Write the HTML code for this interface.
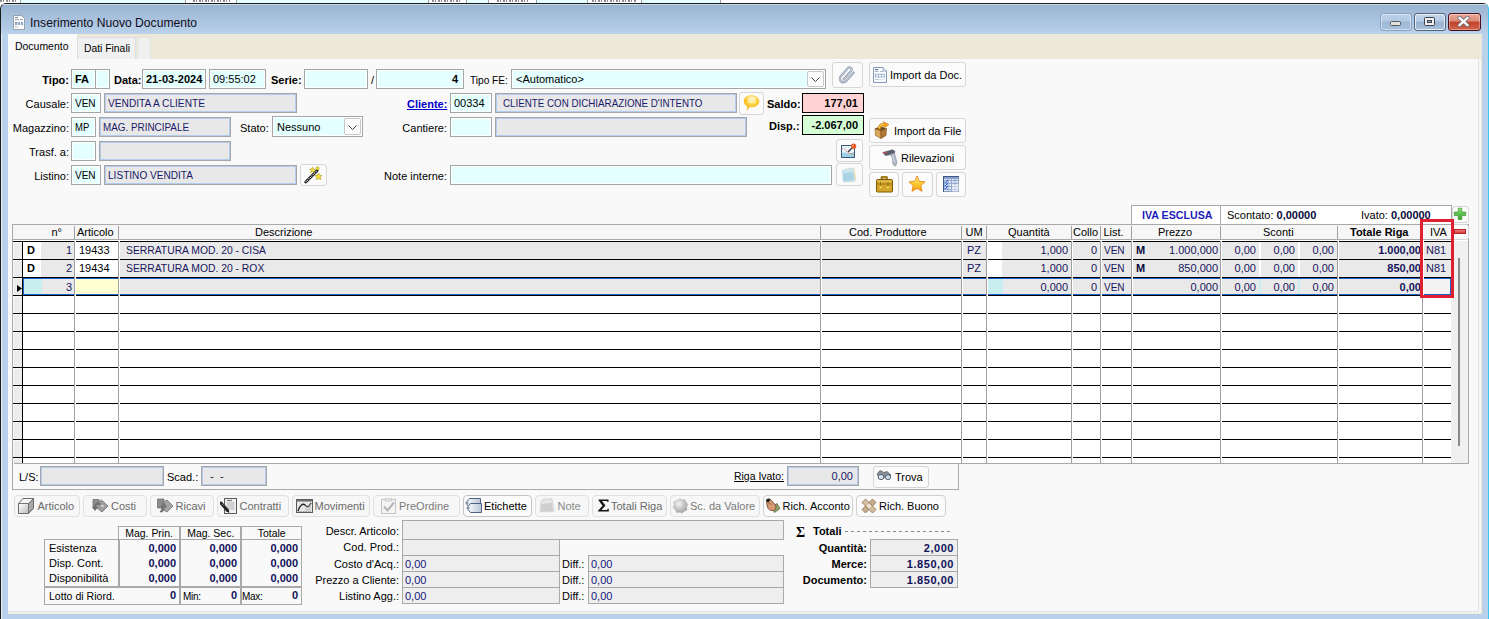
<!DOCTYPE html><html><head><meta charset="utf-8"><style>
*{box-sizing:border-box;margin:0;padding:0}
html,body{width:1489px;height:619px;overflow:hidden;background:#fff;font-family:"Liberation Sans",sans-serif;font-size:11px;color:#000}
div{position:absolute;white-space:nowrap}
.lb{color:#000}
.b{font-weight:bold}
.f{border:1px solid #a5a5a5;background:#e3ffff;box-shadow:inset 0 0 0 1px #fff;line-height:18px;padding-left:3px;color:#000}
.r{border:1px solid #a5a5a5;background:#e8e8e8;box-shadow:inset 0 0 0 1px #b3cdee;line-height:18px;padding-left:3px;color:#1a1a6a}
.c5{letter-spacing:-0.5px}.c6{letter-spacing:-0.6px}.c7{letter-spacing:-0.7px}
.btn{border:1px solid #d6d6d6;border-radius:3px;background:#fbfbfb}
.cmb{border:1px solid #a5a5a5;background:#e3ffff;box-shadow:inset 0 0 0 1px #fff;line-height:18px;padding-left:4px}
.dd{border:1px solid #c8c8c8;background:#fdfdfd;border-radius:2px}
</style></head><body>
<div style="left:0;top:0;width:1489px;height:4px;background:#fff"></div>
<div style="left:21px;top:0;width:164px;height:4px;background:#e3fefe"></div>
<div style="left:237px;top:0;width:191px;height:4px;background:#e3fefe"></div>
<div style="left:467px;top:0;width:21px;height:4px;background:#e3fefe"></div>
<div style="left:537px;top:0;width:50px;height:4px;background:#e3fefe"></div>
<div style="left:642px;top:0;width:78px;height:4px;background:#e3fefe"></div>
<div style="left:20px;top:0;width:1px;height:4px;background:#a0a0a0"></div>
<div style="left:185px;top:0;width:1px;height:4px;background:#a0a0a0"></div>
<div style="left:236px;top:0;width:1px;height:4px;background:#a0a0a0"></div>
<div style="left:428px;top:0;width:1px;height:4px;background:#a0a0a0"></div>
<div style="left:466px;top:0;width:1px;height:4px;background:#a0a0a0"></div>
<div style="left:488px;top:0;width:1px;height:4px;background:#a0a0a0"></div>
<div style="left:536px;top:0;width:1px;height:4px;background:#a0a0a0"></div>
<div style="left:587px;top:0;width:1px;height:4px;background:#a0a0a0"></div>
<div style="left:641px;top:0;width:1px;height:4px;background:#a0a0a0"></div>
<div style="left:720px;top:0;width:1px;height:4px;background:#a0a0a0"></div>
<div style="left:0px;top:0;width:17px;height:2px;background:repeating-linear-gradient(90deg,#333 0 2px,transparent 2px 3px,#333 3px 4px,transparent 4px 6px);opacity:.55"></div>
<div style="left:193px;top:0;width:37px;height:2px;background:repeating-linear-gradient(90deg,#333 0 2px,transparent 2px 3px,#333 3px 4px,transparent 4px 6px);opacity:.55"></div>
<div style="left:432px;top:0;width:30px;height:2px;background:repeating-linear-gradient(90deg,#333 0 2px,transparent 2px 3px,#333 3px 4px,transparent 4px 6px);opacity:.55"></div>
<div style="left:497px;top:0;width:31px;height:2px;background:repeating-linear-gradient(90deg,#333 0 2px,transparent 2px 3px,#333 3px 4px,transparent 4px 6px);opacity:.55"></div>
<div style="left:592px;top:0;width:44px;height:2px;background:repeating-linear-gradient(90deg,#333 0 2px,transparent 2px 3px,#333 3px 4px,transparent 4px 6px);opacity:.55"></div>
<div style="left:0;top:3px;width:1489px;height:620px;border:1px solid #1b1b1b;border-right-color:#38c6ee;border-bottom:none;border-radius:6px 6px 0 0;background:#b9d1ea"></div>
<div style="left:1px;top:8px;width:1px;height:611px;background:#e8f0f8"></div>
<div style="left:1px;top:4px;width:1487px;height:30px;border-radius:5px 5px 0 0;background:linear-gradient(#99b4d1,#b9d1ea)"></div>
<div style="left:1px;top:4px;width:1487px;height:1px;background:#f0f4fa;opacity:.6;border-radius:5px 5px 0 0"></div>
<svg style="position:absolute;left:13px;top:15px" width="12" height="15" viewBox="0 0 12 15">
<path d="M0.5 0.5h8l3 3v11h-11z" fill="#fbfbfb" stroke="#9aa3ad"/>
<rect x="2" y="2" width="3" height="1" fill="#7f8b99"/><rect x="2" y="4" width="4" height="1" fill="#9aa3ad"/>
<rect x="7" y="4" width="3" height="1" fill="#9aa3ad"/>
<rect x="2" y="7" width="8" height="3" fill="#8fa7c4"/><rect x="4.5" y="7" width="0.8" height="3" fill="#fff"/><rect x="7.2" y="7" width="0.8" height="3" fill="#fff"/>
<rect x="2" y="11.5" width="3" height="1" fill="#b9c3cf"/>
</svg>
<div style="left:30px;top:16px;font-size:12px;line-height:15px;color:#120a20"><span style="display:inline-block;transform:scaleX(1.01);transform-origin:0 50%">Inserimento Nuovo Documento</span></div>
<div style="left:1380px;top:13px;width:32px;height:18px;border:1px solid #8aa3c0;border-radius:3px;box-shadow:inset 0 0 0 1px rgba(255,255,255,.45);background:linear-gradient(#bcd1e9 0%,#b3cae4 45%,#9db7d5 50%,#a9c2de 100%)"></div>
<div style="left:1390px;top:21px;width:11px;height:5px;background:#e2e2e2;border:1px solid #5a5a5a;border-radius:1.5px"></div>
<div style="left:1414px;top:13px;width:32px;height:18px;border:1px solid #52657f;border-radius:3px;box-shadow:inset 0 0 0 1px rgba(255,255,255,.7);background:linear-gradient(#c2d5ea 0%,#b5cbe4 45%,#98b2d1 50%,#a8c0dc 100%)"></div>
<div style="left:1424px;top:17px;width:11px;height:9px;background:#f0f0f0;border:1px solid #3c3c4c;border-radius:1.5px"></div>
<div style="left:1427px;top:20px;width:5px;height:3px;background:#9fb6d2;border:1px solid #3c3c4c"></div>
<div style="left:1448px;top:13px;width:33px;height:18px;border:1px solid #4a0f1a;border-radius:3px;box-shadow:inset 0 0 0 1px rgba(255,255,255,.35);background:linear-gradient(#eaa898 0%,#dc8a78 45%,#c0402a 50%,#d0674c 100%)"></div>
<svg style="position:absolute;left:1457px;top:16px" width="13" height="11" viewBox="0 0 13 11"><path d="M2.5 1.8L10.5 9.2M10.5 1.8L2.5 9.2" stroke="#6a6a72" stroke-width="4" stroke-linecap="round"/><path d="M2.5 1.8L10.5 9.2M10.5 1.8L2.5 9.2" stroke="#fbfbfb" stroke-width="2.4" stroke-linecap="round"/></svg>
<div style="left:8px;top:34px;width:1474px;height:580px;background:#ece9d8"></div>
<div style="left:8px;top:59px;width:1473px;height:554px;background:#f6f6f6"></div>
<div style="left:8px;top:59px;width:1471px;height:553px;border-right:1px solid #e2e2e2;border-bottom:1px solid #e2e2e2;background:#f9f9f9"></div>
<div style="left:8px;top:34px;width:1474px;height:25px;background:#ece9d8"></div>
<div style="left:8px;top:34px;width:69px;height:26px;background:#f9f9f9"></div>
<div style="left:15px;top:40px;line-height:13px"><span style="display:inline-block;transform:scaleX(0.95);transform-origin:0 50%">Documento</span></div>
<div style="left:77px;top:37px;width:59px;height:22px;background:#f0f0f0;border:1px solid #dedede;border-bottom:none"></div>
<div style="left:84px;top:42px;line-height:13px"><span style="display:inline-block;transform:scaleX(0.94);transform-origin:0 50%">Dati Finali</span></div>
<div style="left:137px;top:37px;width:14px;height:22px;background:#f0f0f0;border:1px solid #e3e3e3;border-bottom:none"></div>
<div class="lb b" style="right:1420px;top:70px;height:20px;line-height:20px;text-align:right;">Tipo:</div>
<div class="f b" style="left:71px;top:69px;width:25px;height:20px;">FA</div>
<div class="f" style="left:95px;top:69px;width:15px;height:20px;"></div>
<div class="lb b" style="left:114px;top:70px;height:20px;line-height:20px;">Data:</div>
<div class="f b" style="left:142px;top:69px;width:64px;height:20px;">21-03-2024</div>
<div class="f" style="left:209px;top:69px;width:57px;height:20px;">09:55:02</div>
<div class="lb b" style="left:271px;top:70px;height:20px;line-height:20px;">Serie:</div>
<div class="f" style="left:304px;top:69px;width:64px;height:20px;"></div>
<div class="lb" style="left:371px;top:70px;height:20px;line-height:20px;">/</div>
<div class="f b" style="left:376px;top:69px;width:88px;height:20px;text-align:right;padding-right:5px">4</div>
<div class="lb" style="left:470px;top:70px;height:20px;line-height:20px;"><span style="display:inline-block;transform:scaleX(0.92);transform-origin:0 50%">Tipo FE:</span></div>
<div class="cmb" style="left:511px;top:69px;width:315px;height:20px;">&lt;Automatico&gt;</div>
<div class="dd" style="left:807px;top:71px;width:17px;height:16px"></div>
<svg style="position:absolute;left:811px;top:77px" width="9" height="6"><path d="M0.5 0.5L4.5 4.5L8.5 0.5" fill="none" stroke="#444" stroke-width="1"/></svg>
<div class="btn" style="left:832px;top:62px;width:31px;height:26px;"></div>
<svg style="position:absolute;left:838px;top:66px" width="18" height="18" viewBox="0 0 18 18"><path d="M5.5 13.5 L13 5 C14.2 3.6 13.6 1.6 12 1.4 C11 1.2 10.2 1.7 9.6 2.4 L2.8 10.3 C1.3 12 1.6 14.6 3.4 15.8 C5 16.8 7 16.3 8.2 15 L15.8 6.5" fill="none" stroke="#8e9cb0" stroke-width="2.2" stroke-linecap="round"/><path d="M5.5 13.5 L13 5 C14.2 3.6 13.6 1.6 12 1.4 C11 1.2 10.2 1.7 9.6 2.4 L2.8 10.3 C1.3 12 1.6 14.6 3.4 15.8 C5 16.8 7 16.3 8.2 15 L15.8 6.5" fill="none" stroke="#d8dee8" stroke-width=".8" stroke-linecap="round"/></svg>
<div class="btn" style="left:869px;top:62px;width:97px;height:25px;"></div>
<svg style="position:absolute;left:873px;top:67px" width="14" height="16" viewBox="0 0 14 16"><path d="M0.5 0.5h9.5l3.5 3.5v11.5h-13z" fill="#fdfdfd" stroke="#8199b8"/><path d="M10 0.5v3.5h3.5" fill="#e8eef6" stroke="#8199b8" stroke-width=".8"/><rect x="2" y="2" width="3" height="1.2" fill="#5f7595"/><rect x="2" y="4" width="3.5" height="1" fill="#a8b4c4"/><rect x="7" y="4" width="3" height="1" fill="#a8b4c4"/><rect x="2" y="6.8" width="10" height="3.6" fill="#8ea6c6"/><rect x="3" y="7.6" width="2.2" height="2" fill="#fff"/><rect x="6" y="7.6" width="2.2" height="2" fill="#fff"/><rect x="9" y="7.6" width="2.2" height="2" fill="#fff"/><rect x="2" y="12" width="4" height="1" fill="#b8c8dc"/><rect x="6.5" y="12" width="5" height="1" fill="#dde4ec"/></svg>
<div style="left:890px;top:68px;font-size:11px;line-height:14px">Import da Doc.</div>
<div class="lb" style="right:1420px;top:94px;height:20px;line-height:20px;text-align:right;">Causale:</div>
<div class="f" style="left:71px;top:93px;width:30px;height:20px;"><span style="display:inline-block;transform:scaleX(0.91);transform-origin:0 50%">VEN</span></div>
<div class="r" style="left:104px;top:93px;width:193px;height:20px;"><span style="display:inline-block;transform:scaleX(0.924);transform-origin:0 50%">VENDITA A CLIENTE</span></div>
<div class="b" style="left:407px;top:94px;line-height:20px;color:#0000cc;text-decoration:underline">Cliente:</div>
<div class="f" style="left:450px;top:93px;width:42px;height:20px;">00334</div>
<div class="r" style="left:495px;top:93px;width:242px;height:20px;padding-left:7px"><span style="display:inline-block;transform:scaleX(0.889);transform-origin:0 50%">CLIENTE CON DICHIARAZIONE D'INTENTO</span></div>
<div class="btn" style="left:739px;top:92px;width:25px;height:23px;"></div>
<svg style="position:absolute;left:742px;top:94px" width="19" height="18" viewBox="0 0 19 18"><defs><radialGradient id="bub" cx=".55" cy=".3" r=".75"><stop offset="0" stop-color="#fff6b0"/><stop offset=".45" stop-color="#fcd23a"/><stop offset="1" stop-color="#f59a00"/></radialGradient></defs><path d="M9.5 1.2 C14 1.2 17.3 3.8 17.3 7.3 C17.3 10.8 14 13.3 9.5 13.3 C8.8 13.3 8.2 13.2 7.6 13.1 L4.8 16.8 L5.4 12.5 C3.2 11.4 1.7 9.5 1.7 7.3 C1.7 3.8 5 1.2 9.5 1.2z" fill="url(#bub)"/><ellipse cx="9.6" cy="4.2" rx="4.5" ry="2" fill="#fff" opacity=".45"/><circle cx="6.8" cy="8" r=".9" fill="#fff" opacity=".85"/><circle cx="9.6" cy="8" r=".9" fill="#fff" opacity=".85"/><circle cx="12.4" cy="8" r=".9" fill="#fff" opacity=".85"/></svg>
<div class="lb b" style="left:767px;top:94px;height:20px;line-height:20px;">Saldo:</div>
<div class="" style="left:802px;top:93px;width:62px;height:20px;border:1px solid #000;background:#ffd3d3;font-weight:bold;text-align:right;padding-right:5px;line-height:18px">177,01</div>
<div class="lb" style="right:1420px;top:118px;height:20px;line-height:20px;text-align:right;">Magazzino:</div>
<div class="f" style="left:71px;top:117px;width:25px;height:20px;"><span style="display:inline-block;transform:scaleX(0.86);transform-origin:0 50%">MP</span></div>
<div class="r" style="left:99px;top:117px;width:132px;height:20px;"><span style="display:inline-block;transform:scaleX(0.898);transform-origin:0 50%">MAG. PRINCIPALE</span></div>
<div class="lb" style="left:240px;top:118px;height:20px;line-height:20px;">Stato:</div>
<div class="cmb" style="left:272px;top:116px;width:91px;height:21px;line-height:21px">Nessuno</div>
<div class="dd" style="left:344px;top:118px;width:17px;height:17px"></div>
<svg style="position:absolute;left:348px;top:125px" width="9" height="6"><path d="M0.5 0.5L4.5 4.5L8.5 0.5" fill="none" stroke="#444" stroke-width="1"/></svg>
<div class="lb" style="right:1042px;top:118px;height:20px;line-height:20px;text-align:right;">Cantiere:</div>
<div class="f" style="left:450px;top:117px;width:42px;height:20px;"></div>
<div class="r" style="left:495px;top:117px;width:252px;height:20px;"></div>
<div class="lb b" style="left:769px;top:116px;height:20px;line-height:20px;">Disp.:</div>
<div class="" style="left:802px;top:115px;width:62px;height:20px;border:1px solid #000;background:#d5ffd5;font-weight:bold;text-align:right;padding-right:5px;line-height:18px">-2.067,00</div>
<div class="btn" style="left:869px;top:118px;width:97px;height:25px;"></div>
<svg style="position:absolute;left:874px;top:121px" width="16" height="18" viewBox="0 0 16 18"><path d="M1 7.5 L7 10 L7 17.5 L1.5 14.5z" fill="#d9a85a" stroke="#8a5a20" stroke-width=".6"/><path d="M7 10 L12.5 7.5 L12 14.5 L7 17.5z" fill="#b07a34" stroke="#7a4a18" stroke-width=".6"/><path d="M1 7.5 L6.5 5.2 L12.5 7.5 L7 10z" fill="#6a4a20"/><path d="M4 8 C4 4 6.5 2 10 2.5 L9.5 0.8 L14.8 3.6 L10.5 6.8 L10.3 5 C8 4.8 6.5 6 6.3 8.5z" fill="#f7a51c" stroke="#c06a00" stroke-width=".6"/><path d="M5 7 C5.5 4.5 7.5 3.3 10 3.5" fill="none" stroke="#ffe08a" stroke-width=".8"/></svg>
<div style="left:894px;top:124px;font-size:11px;line-height:14px">Import da File</div>
<div class="lb" style="right:1420px;top:142px;height:20px;line-height:20px;text-align:right;">Trasf. a:</div>
<div class="f" style="left:71px;top:141px;width:25px;height:20px;"></div>
<div class="r" style="left:99px;top:141px;width:132px;height:20px;"></div>
<div class="btn" style="left:836px;top:139px;width:27px;height:23px;"></div>
<svg style="position:absolute;left:840px;top:143px" width="17" height="16" viewBox="0 0 17 16"><rect x="1.5" y="2.5" width="13" height="12" fill="#e8f4fa" stroke="#3a5a80"/><path d="M2 10 C5 8 8 12 14 9 V14 H2z" fill="#9fd0e4"/><path d="M2 6 C3 5 5 6 7 9 C9 11 11 10 14 12" fill="none" stroke="#e07a50" stroke-width=".9" stroke-dasharray="1.2 .6"/><path d="M8 9 L12 5" stroke="#333" stroke-width="1.3"/><circle cx="13.6" cy="3.2" r="2.6" fill="#e85a20"/><circle cx="13" cy="2.6" r=".9" fill="#ffb080"/></svg>
<div class="btn" style="left:869px;top:145px;width:97px;height:25px;"></div>
<svg style="position:absolute;left:882px;top:149px" width="17" height="18" viewBox="0 0 17 18"><path d="M0.8 3.5 L10.5 0.8 L13 2.5 L12 5 L3.5 6.5z" fill="#5a6070" stroke="#3a4050" stroke-width=".5"/><path d="M1.2 4 L5 3.2" stroke="#e04040" stroke-width=".9"/><path d="M8.5 5 L12.5 4.2 L15 14 L13.5 17 L11 15.5 L10.5 9.5z" fill="#b4bccb" stroke="#7a8290" stroke-width=".6"/><path d="M11 6 L12 13" stroke="#dde2ea" stroke-width=".8"/></svg>
<div style="left:901px;top:151px;font-size:11px;line-height:14px">Rilevazioni</div>
<div class="lb" style="right:1420px;top:166px;height:20px;line-height:20px;text-align:right;">Listino:</div>
<div class="f" style="left:71px;top:165px;width:30px;height:20px;"><span style="display:inline-block;transform:scaleX(0.91);transform-origin:0 50%">VEN</span></div>
<div class="r" style="left:104px;top:165px;width:193px;height:20px;"><span style="display:inline-block;transform:scaleX(0.917);transform-origin:0 50%">LISTINO VENDITA</span></div>
<div class="btn" style="left:300px;top:164px;width:27px;height:22px;"></div>
<svg style="position:absolute;left:304px;top:166px" width="19" height="18" viewBox="0 0 19 18"><path d="M1.8 16 L13 4.8" stroke="#111" stroke-width="2.8" stroke-linecap="round"/><path d="M1.8 16 L13 4.8" stroke="#fff" stroke-width="1.2" stroke-dasharray="1 1"/><path d="M8.5 1 l.9 2 2.1.2 -1.6 1.4 .5 2.1 -1.9 -1.1 -1.9 1.1 .5 -2.1 -1.6 -1.4 2.1 -.2z" fill="#f4e03a" stroke="#9a8a10" stroke-width=".5"/><path d="M14.5 7 l1.1 2.3 2.5 .3 -1.9 1.7 .6 2.5 -2.3 -1.3 -2.3 1.3 .6 -2.5 -1.9 -1.7 2.5 -.3z" fill="#f4e03a" stroke="#9a8a10" stroke-width=".5"/><circle cx="13.6" cy="2.4" r="1.6" fill="#f4e03a" stroke="#9a8a10" stroke-width=".5"/></svg>
<div class="lb" style="right:1042px;top:166px;height:20px;line-height:20px;text-align:right;">Note interne:</div>
<div class="f" style="left:450px;top:165px;width:382px;height:20px;"></div>
<div class="btn" style="left:836px;top:163px;width:27px;height:23px;"></div>
<svg style="position:absolute;left:840px;top:166px" width="18" height="17" viewBox="0 0 18 17"><path d="M5 2.5 L14.5 1.5 L16.5 14 L6 15z" fill="#f2dfb0"/><path d="M2 4 L13 2 L15 14.5 L3 15.5z" fill="#a8d4e4" stroke="#d8ecf4" stroke-width=".6"/><path d="M2.5 4.2 L12.8 2.4 L13.4 6 L3 7.5z" fill="#d0e8f2" opacity=".8"/><path d="M3 15.5 L15 14.5 L15.5 15.5 L3.5 16.5z" fill="#c8d8e0"/></svg>
<div class="btn" style="left:869px;top:172px;width:30px;height:25px;"></div>
<svg style="position:absolute;left:876px;top:176px" width="17" height="17" viewBox="0 0 17 17"><path d="M5 3.5 V1.2 C5 .6 5.5 .3 6 .3 H10.5 C11 .3 11.5 .6 11.5 1.2 V3.5 H10 V2 H6.5 V3.5z" fill="#b98a10" stroke="#7a5a00" stroke-width=".6"/><rect x="0.5" y="3.5" width="16" height="12.5" rx="1" fill="#d4a32a" stroke="#7a5a00"/><path d="M0.5 8 H16.5" stroke="#9a7410" stroke-width="1"/><path d="M4.5 5 V11 M12 5 V11" stroke="#8a6a10" stroke-width=".8"/><path d="M4.5 10 l1.3 1.3 -1.3 1.3 -1.3 -1.3z M12 10 l1.3 1.3 -1.3 1.3 -1.3 -1.3z" fill="#ffe66a"/><rect x="1.5" y="4.3" width="14" height="2" fill="#e8c058" opacity=".7"/></svg>
<div class="btn" style="left:902px;top:172px;width:31px;height:25px;"></div>
<svg style="position:absolute;left:908px;top:175px" width="18" height="18" viewBox="0 0 18 18"><defs><linearGradient id="stg" x1="0" y1="0" x2="0" y2="1"><stop offset="0" stop-color="#fff1a0"/><stop offset=".5" stop-color="#fcc830"/><stop offset="1" stop-color="#f5a010"/></linearGradient></defs><path d="M9 1 L11.4 6.3 L17 6.9 L12.8 10.6 L14 16.3 L9 13.4 L4 16.3 L5.2 10.6 L1 6.9 L6.6 6.3z" fill="url(#stg)" stroke="#e8881a" stroke-width=".9" stroke-linejoin="round"/></svg>
<div class="btn" style="left:936px;top:172px;width:30px;height:25px;"></div>
<svg style="position:absolute;left:943px;top:176px" width="16" height="16" viewBox="0 0 16 16"><rect x="0.5" y="0.5" width="15.5" height="15.5" fill="#dce6f4" stroke="#3c5488"/><rect x="1" y="1" width="14.5" height="2" fill="#8aa0c8"/><path d="M1 4.5h14.5M1 7.5h14.5M1 10.5h14.5M1 13.5h14.5M5 1v15M8.5 1v15M12 1v15" stroke="#8fa4cc" stroke-width=".9"/><path d="M1.2 5.5 L2.5 7 L4.8 3.8 M1.2 8.5 L2.5 10 L4.8 6.8 M1.2 11.5 L2.5 13 L4.8 9.8" fill="none" stroke="#1f5ad8" stroke-width="1"/><rect x="9.2" y="8.2" width="6.5" height="7.5" fill="#f4f8fc" opacity=".5"/></svg>
<div style="left:12px;top:224px;width:1457px;height:240px;border:1px solid #a9a9a9;background:#fff"></div>
<div style="left:13px;top:225px;width:1438px;height:14px;background:#f6f6f6"></div>
<div style="left:13px;top:239px;width:1438px;height:1px;background:#a9a9a9"></div>
<div style="left:13px;top:240px;width:1438px;height:1px;background:#fff"></div>
<div style="left:51.5px;top:225px;height:14px;line-height:14px">n°</div>
<div style="left:77px;top:225px;height:14px;line-height:14px">Articolo</div>
<div style="left:255px;top:225px;height:14px;line-height:14px">Descrizione</div>
<div style="left:849px;top:225px;height:14px;line-height:14px">Cod. Produttore</div>
<div style="left:965.5px;top:225px;height:14px;line-height:14px">UM</div>
<div style="left:1008px;top:225px;height:14px;line-height:14px">Quantità</div>
<div style="left:1073px;top:225px;height:14px;line-height:14px">Collo</div>
<div style="left:1103.5px;top:225px;height:14px;line-height:14px">List.</div>
<div style="left:1158px;top:225px;height:14px;line-height:14px">Prezzo</div>
<div style="left:1263px;top:225px;height:14px;line-height:14px">Sconti</div>
<div style="left:1350px;top:225px;height:14px;line-height:14px"><b>Totale Riga</b></div>
<div style="left:1430px;top:225px;height:14px;line-height:14px">IVA</div>
<div style="left:74px;top:226px;width:1px;height:13px;background:#a0a0a0"></div>
<div style="left:118px;top:226px;width:1px;height:13px;background:#a0a0a0"></div>
<div style="left:820px;top:226px;width:1px;height:13px;background:#a0a0a0"></div>
<div style="left:961px;top:226px;width:1px;height:13px;background:#a0a0a0"></div>
<div style="left:986px;top:226px;width:1px;height:13px;background:#a0a0a0"></div>
<div style="left:1071px;top:226px;width:1px;height:13px;background:#a0a0a0"></div>
<div style="left:1100px;top:226px;width:1px;height:13px;background:#a0a0a0"></div>
<div style="left:1131px;top:226px;width:1px;height:13px;background:#a0a0a0"></div>
<div style="left:1220px;top:226px;width:1px;height:13px;background:#a0a0a0"></div>
<div style="left:1337px;top:226px;width:1px;height:13px;background:#a0a0a0"></div>
<div style="left:1422px;top:226px;width:1px;height:13px;background:#a0a0a0"></div>
<div style="left:13px;top:241px;width:9px;height:222px;background:#ececec"></div>
<div style="left:22px;top:241px;width:1px;height:222px;background:#000"></div>
<div style="left:13px;top:242px;width:9px;height:17px;border-top:1px solid #fafafa;border-left:1px solid #fafafa"></div>
<div style="left:13px;top:260px;width:9px;height:17px;border-top:1px solid #fafafa;border-left:1px solid #fafafa"></div>
<div style="left:13px;top:278px;width:9px;height:17px;border-top:1px solid #fafafa;border-left:1px solid #fafafa"></div>
<div style="left:13px;top:296px;width:9px;height:17px;border-top:1px solid #fafafa;border-left:1px solid #fafafa"></div>
<div style="left:13px;top:314px;width:9px;height:17px;border-top:1px solid #fafafa;border-left:1px solid #fafafa"></div>
<div style="left:13px;top:332px;width:9px;height:17px;border-top:1px solid #fafafa;border-left:1px solid #fafafa"></div>
<div style="left:13px;top:350px;width:9px;height:17px;border-top:1px solid #fafafa;border-left:1px solid #fafafa"></div>
<div style="left:13px;top:368px;width:9px;height:17px;border-top:1px solid #fafafa;border-left:1px solid #fafafa"></div>
<div style="left:13px;top:386px;width:9px;height:17px;border-top:1px solid #fafafa;border-left:1px solid #fafafa"></div>
<div style="left:13px;top:404px;width:9px;height:17px;border-top:1px solid #fafafa;border-left:1px solid #fafafa"></div>
<div style="left:13px;top:422px;width:9px;height:17px;border-top:1px solid #fafafa;border-left:1px solid #fafafa"></div>
<div style="left:13px;top:440px;width:9px;height:17px;border-top:1px solid #fafafa;border-left:1px solid #fafafa"></div>
<div style="left:13px;top:458px;width:9px;height:17px;border-top:1px solid #fafafa;border-left:1px solid #fafafa"></div>
<div style="left:74px;top:241px;width:1px;height:222px;background:#a0a0a0"></div>
<div style="left:118px;top:241px;width:1px;height:222px;background:#a0a0a0"></div>
<div style="left:820px;top:241px;width:1px;height:222px;background:#a0a0a0"></div>
<div style="left:961px;top:241px;width:1px;height:222px;background:#a0a0a0"></div>
<div style="left:986px;top:241px;width:1px;height:222px;background:#a0a0a0"></div>
<div style="left:1071px;top:241px;width:1px;height:222px;background:#a0a0a0"></div>
<div style="left:1100px;top:241px;width:1px;height:222px;background:#a0a0a0"></div>
<div style="left:1131px;top:241px;width:1px;height:222px;background:#a0a0a0"></div>
<div style="left:1220px;top:241px;width:1px;height:222px;background:#a0a0a0"></div>
<div style="left:1337px;top:241px;width:1px;height:222px;background:#a0a0a0"></div>
<div style="left:1422px;top:241px;width:1px;height:222px;background:#a0a0a0"></div>
<div style="left:13px;top:241px;width:10px;height:1px;background:#000"></div>
<div style="left:23px;top:241px;width:51px;height:1px;background:#000"></div>
<div style="left:76px;top:241px;width:42px;height:1px;background:#000"></div>
<div style="left:120px;top:241px;width:700px;height:1px;background:#000"></div>
<div style="left:822px;top:241px;width:139px;height:1px;background:#000"></div>
<div style="left:963px;top:241px;width:23px;height:1px;background:#000"></div>
<div style="left:988px;top:241px;width:83px;height:1px;background:#000"></div>
<div style="left:1073px;top:241px;width:27px;height:1px;background:#000"></div>
<div style="left:1102px;top:241px;width:29px;height:1px;background:#000"></div>
<div style="left:1133px;top:241px;width:87px;height:1px;background:#000"></div>
<div style="left:1222px;top:241px;width:115px;height:1px;background:#000"></div>
<div style="left:1339px;top:241px;width:83px;height:1px;background:#000"></div>
<div style="left:1424px;top:241px;width:27px;height:1px;background:#000"></div>
<div style="left:13px;top:259px;width:10px;height:1px;background:#000"></div>
<div style="left:23px;top:259px;width:51px;height:1px;background:#000"></div>
<div style="left:76px;top:259px;width:42px;height:1px;background:#000"></div>
<div style="left:120px;top:259px;width:700px;height:1px;background:#000"></div>
<div style="left:822px;top:259px;width:139px;height:1px;background:#000"></div>
<div style="left:963px;top:259px;width:23px;height:1px;background:#000"></div>
<div style="left:988px;top:259px;width:83px;height:1px;background:#000"></div>
<div style="left:1073px;top:259px;width:27px;height:1px;background:#000"></div>
<div style="left:1102px;top:259px;width:29px;height:1px;background:#000"></div>
<div style="left:1133px;top:259px;width:87px;height:1px;background:#000"></div>
<div style="left:1222px;top:259px;width:115px;height:1px;background:#000"></div>
<div style="left:1339px;top:259px;width:83px;height:1px;background:#000"></div>
<div style="left:1424px;top:259px;width:27px;height:1px;background:#000"></div>
<div style="left:13px;top:277px;width:10px;height:1px;background:#000"></div>
<div style="left:23px;top:277px;width:51px;height:1px;background:#000"></div>
<div style="left:76px;top:277px;width:42px;height:1px;background:#000"></div>
<div style="left:120px;top:277px;width:700px;height:1px;background:#000"></div>
<div style="left:822px;top:277px;width:139px;height:1px;background:#000"></div>
<div style="left:963px;top:277px;width:23px;height:1px;background:#000"></div>
<div style="left:988px;top:277px;width:83px;height:1px;background:#000"></div>
<div style="left:1073px;top:277px;width:27px;height:1px;background:#000"></div>
<div style="left:1102px;top:277px;width:29px;height:1px;background:#000"></div>
<div style="left:1133px;top:277px;width:87px;height:1px;background:#000"></div>
<div style="left:1222px;top:277px;width:115px;height:1px;background:#000"></div>
<div style="left:1339px;top:277px;width:83px;height:1px;background:#000"></div>
<div style="left:1424px;top:277px;width:27px;height:1px;background:#000"></div>
<div style="left:13px;top:295px;width:10px;height:1px;background:#000"></div>
<div style="left:23px;top:295px;width:51px;height:1px;background:#000"></div>
<div style="left:76px;top:295px;width:42px;height:1px;background:#000"></div>
<div style="left:120px;top:295px;width:700px;height:1px;background:#000"></div>
<div style="left:822px;top:295px;width:139px;height:1px;background:#000"></div>
<div style="left:963px;top:295px;width:23px;height:1px;background:#000"></div>
<div style="left:988px;top:295px;width:83px;height:1px;background:#000"></div>
<div style="left:1073px;top:295px;width:27px;height:1px;background:#000"></div>
<div style="left:1102px;top:295px;width:29px;height:1px;background:#000"></div>
<div style="left:1133px;top:295px;width:87px;height:1px;background:#000"></div>
<div style="left:1222px;top:295px;width:115px;height:1px;background:#000"></div>
<div style="left:1339px;top:295px;width:83px;height:1px;background:#000"></div>
<div style="left:1424px;top:295px;width:27px;height:1px;background:#000"></div>
<div style="left:13px;top:313px;width:10px;height:1px;background:#000"></div>
<div style="left:23px;top:313px;width:51px;height:1px;background:#000"></div>
<div style="left:76px;top:313px;width:42px;height:1px;background:#000"></div>
<div style="left:120px;top:313px;width:700px;height:1px;background:#000"></div>
<div style="left:822px;top:313px;width:139px;height:1px;background:#000"></div>
<div style="left:963px;top:313px;width:23px;height:1px;background:#000"></div>
<div style="left:988px;top:313px;width:83px;height:1px;background:#000"></div>
<div style="left:1073px;top:313px;width:27px;height:1px;background:#000"></div>
<div style="left:1102px;top:313px;width:29px;height:1px;background:#000"></div>
<div style="left:1133px;top:313px;width:87px;height:1px;background:#000"></div>
<div style="left:1222px;top:313px;width:115px;height:1px;background:#000"></div>
<div style="left:1339px;top:313px;width:83px;height:1px;background:#000"></div>
<div style="left:1424px;top:313px;width:27px;height:1px;background:#000"></div>
<div style="left:13px;top:331px;width:10px;height:1px;background:#000"></div>
<div style="left:23px;top:331px;width:51px;height:1px;background:#000"></div>
<div style="left:76px;top:331px;width:42px;height:1px;background:#000"></div>
<div style="left:120px;top:331px;width:700px;height:1px;background:#000"></div>
<div style="left:822px;top:331px;width:139px;height:1px;background:#000"></div>
<div style="left:963px;top:331px;width:23px;height:1px;background:#000"></div>
<div style="left:988px;top:331px;width:83px;height:1px;background:#000"></div>
<div style="left:1073px;top:331px;width:27px;height:1px;background:#000"></div>
<div style="left:1102px;top:331px;width:29px;height:1px;background:#000"></div>
<div style="left:1133px;top:331px;width:87px;height:1px;background:#000"></div>
<div style="left:1222px;top:331px;width:115px;height:1px;background:#000"></div>
<div style="left:1339px;top:331px;width:83px;height:1px;background:#000"></div>
<div style="left:1424px;top:331px;width:27px;height:1px;background:#000"></div>
<div style="left:13px;top:349px;width:10px;height:1px;background:#000"></div>
<div style="left:23px;top:349px;width:51px;height:1px;background:#000"></div>
<div style="left:76px;top:349px;width:42px;height:1px;background:#000"></div>
<div style="left:120px;top:349px;width:700px;height:1px;background:#000"></div>
<div style="left:822px;top:349px;width:139px;height:1px;background:#000"></div>
<div style="left:963px;top:349px;width:23px;height:1px;background:#000"></div>
<div style="left:988px;top:349px;width:83px;height:1px;background:#000"></div>
<div style="left:1073px;top:349px;width:27px;height:1px;background:#000"></div>
<div style="left:1102px;top:349px;width:29px;height:1px;background:#000"></div>
<div style="left:1133px;top:349px;width:87px;height:1px;background:#000"></div>
<div style="left:1222px;top:349px;width:115px;height:1px;background:#000"></div>
<div style="left:1339px;top:349px;width:83px;height:1px;background:#000"></div>
<div style="left:1424px;top:349px;width:27px;height:1px;background:#000"></div>
<div style="left:13px;top:367px;width:10px;height:1px;background:#000"></div>
<div style="left:23px;top:367px;width:51px;height:1px;background:#000"></div>
<div style="left:76px;top:367px;width:42px;height:1px;background:#000"></div>
<div style="left:120px;top:367px;width:700px;height:1px;background:#000"></div>
<div style="left:822px;top:367px;width:139px;height:1px;background:#000"></div>
<div style="left:963px;top:367px;width:23px;height:1px;background:#000"></div>
<div style="left:988px;top:367px;width:83px;height:1px;background:#000"></div>
<div style="left:1073px;top:367px;width:27px;height:1px;background:#000"></div>
<div style="left:1102px;top:367px;width:29px;height:1px;background:#000"></div>
<div style="left:1133px;top:367px;width:87px;height:1px;background:#000"></div>
<div style="left:1222px;top:367px;width:115px;height:1px;background:#000"></div>
<div style="left:1339px;top:367px;width:83px;height:1px;background:#000"></div>
<div style="left:1424px;top:367px;width:27px;height:1px;background:#000"></div>
<div style="left:13px;top:385px;width:10px;height:1px;background:#000"></div>
<div style="left:23px;top:385px;width:51px;height:1px;background:#000"></div>
<div style="left:76px;top:385px;width:42px;height:1px;background:#000"></div>
<div style="left:120px;top:385px;width:700px;height:1px;background:#000"></div>
<div style="left:822px;top:385px;width:139px;height:1px;background:#000"></div>
<div style="left:963px;top:385px;width:23px;height:1px;background:#000"></div>
<div style="left:988px;top:385px;width:83px;height:1px;background:#000"></div>
<div style="left:1073px;top:385px;width:27px;height:1px;background:#000"></div>
<div style="left:1102px;top:385px;width:29px;height:1px;background:#000"></div>
<div style="left:1133px;top:385px;width:87px;height:1px;background:#000"></div>
<div style="left:1222px;top:385px;width:115px;height:1px;background:#000"></div>
<div style="left:1339px;top:385px;width:83px;height:1px;background:#000"></div>
<div style="left:1424px;top:385px;width:27px;height:1px;background:#000"></div>
<div style="left:13px;top:403px;width:10px;height:1px;background:#000"></div>
<div style="left:23px;top:403px;width:51px;height:1px;background:#000"></div>
<div style="left:76px;top:403px;width:42px;height:1px;background:#000"></div>
<div style="left:120px;top:403px;width:700px;height:1px;background:#000"></div>
<div style="left:822px;top:403px;width:139px;height:1px;background:#000"></div>
<div style="left:963px;top:403px;width:23px;height:1px;background:#000"></div>
<div style="left:988px;top:403px;width:83px;height:1px;background:#000"></div>
<div style="left:1073px;top:403px;width:27px;height:1px;background:#000"></div>
<div style="left:1102px;top:403px;width:29px;height:1px;background:#000"></div>
<div style="left:1133px;top:403px;width:87px;height:1px;background:#000"></div>
<div style="left:1222px;top:403px;width:115px;height:1px;background:#000"></div>
<div style="left:1339px;top:403px;width:83px;height:1px;background:#000"></div>
<div style="left:1424px;top:403px;width:27px;height:1px;background:#000"></div>
<div style="left:13px;top:421px;width:10px;height:1px;background:#000"></div>
<div style="left:23px;top:421px;width:51px;height:1px;background:#000"></div>
<div style="left:76px;top:421px;width:42px;height:1px;background:#000"></div>
<div style="left:120px;top:421px;width:700px;height:1px;background:#000"></div>
<div style="left:822px;top:421px;width:139px;height:1px;background:#000"></div>
<div style="left:963px;top:421px;width:23px;height:1px;background:#000"></div>
<div style="left:988px;top:421px;width:83px;height:1px;background:#000"></div>
<div style="left:1073px;top:421px;width:27px;height:1px;background:#000"></div>
<div style="left:1102px;top:421px;width:29px;height:1px;background:#000"></div>
<div style="left:1133px;top:421px;width:87px;height:1px;background:#000"></div>
<div style="left:1222px;top:421px;width:115px;height:1px;background:#000"></div>
<div style="left:1339px;top:421px;width:83px;height:1px;background:#000"></div>
<div style="left:1424px;top:421px;width:27px;height:1px;background:#000"></div>
<div style="left:13px;top:439px;width:10px;height:1px;background:#000"></div>
<div style="left:23px;top:439px;width:51px;height:1px;background:#000"></div>
<div style="left:76px;top:439px;width:42px;height:1px;background:#000"></div>
<div style="left:120px;top:439px;width:700px;height:1px;background:#000"></div>
<div style="left:822px;top:439px;width:139px;height:1px;background:#000"></div>
<div style="left:963px;top:439px;width:23px;height:1px;background:#000"></div>
<div style="left:988px;top:439px;width:83px;height:1px;background:#000"></div>
<div style="left:1073px;top:439px;width:27px;height:1px;background:#000"></div>
<div style="left:1102px;top:439px;width:29px;height:1px;background:#000"></div>
<div style="left:1133px;top:439px;width:87px;height:1px;background:#000"></div>
<div style="left:1222px;top:439px;width:115px;height:1px;background:#000"></div>
<div style="left:1339px;top:439px;width:83px;height:1px;background:#000"></div>
<div style="left:1424px;top:439px;width:27px;height:1px;background:#000"></div>
<div style="left:13px;top:457px;width:10px;height:1px;background:#000"></div>
<div style="left:23px;top:457px;width:51px;height:1px;background:#000"></div>
<div style="left:76px;top:457px;width:42px;height:1px;background:#000"></div>
<div style="left:120px;top:457px;width:700px;height:1px;background:#000"></div>
<div style="left:822px;top:457px;width:139px;height:1px;background:#000"></div>
<div style="left:963px;top:457px;width:23px;height:1px;background:#000"></div>
<div style="left:988px;top:457px;width:83px;height:1px;background:#000"></div>
<div style="left:1073px;top:457px;width:27px;height:1px;background:#000"></div>
<div style="left:1102px;top:457px;width:29px;height:1px;background:#000"></div>
<div style="left:1133px;top:457px;width:87px;height:1px;background:#000"></div>
<div style="left:1222px;top:457px;width:115px;height:1px;background:#000"></div>
<div style="left:1339px;top:457px;width:83px;height:1px;background:#000"></div>
<div style="left:1424px;top:457px;width:27px;height:1px;background:#000"></div>
<div style="left:23px;top:242px;width:51px;height:17px;line-height:17px;text-align:left;color:#16165c;background:#e9e9e9;padding-left:3px;"></div>
<div style="left:23px;top:242px;width:18px;height:17px;background:#fff;line-height:17px;padding-left:4px;font-weight:bold">D</div>
<div style="left:41px;top:242px;width:33px;height:17px;line-height:17px;text-align:right;padding-right:2px;color:#16165c">1</div>
<div style="left:76px;top:242px;width:42px;height:17px;line-height:17px;text-align:left;color:#16165c;background:#fff;padding-left:3px;color:#000;">19433</div>
<div style="left:120px;top:242px;width:700px;height:17px;line-height:17px;text-align:left;color:#16165c;background:#e9e9e9;padding-left:6px;"><span style="display:inline-block;transform:scaleX(0.94);transform-origin:0 50%">SERRATURA MOD. 20 - CISA</span></div>
<div style="left:822px;top:242px;width:139px;height:17px;line-height:17px;text-align:left;color:#16165c;background:#e9e9e9;padding-left:3px;"></div>
<div style="left:963px;top:242px;width:23px;height:17px;line-height:17px;text-align:left;color:#16165c;background:#e9e9e9;padding-left:4px;">PZ</div>
<div style="left:988px;top:242px;width:83px;height:17px;line-height:17px;text-align:right;color:#16165c;background:#e9e9e9;padding-right:3px;">1,000</div>
<div style="left:988px;top:242px;width:14px;height:17px;background:#fff"></div>
<div style="left:1073px;top:242px;width:27px;height:17px;line-height:17px;text-align:right;color:#16165c;background:#e9e9e9;padding-right:3px;">0</div>
<div style="left:1102px;top:242px;width:29px;height:17px;line-height:17px;text-align:left;color:#16165c;background:#e9e9e9;padding-left:2px;"><span style="display:inline-block;transform:scaleX(0.91);transform-origin:0 50%">VEN</span></div>
<div style="left:1133px;top:242px;width:87px;height:17px;line-height:17px;text-align:right;color:#16165c;background:#e9e9e9;padding-right:2px;">1.000,000</div>
<div style="left:1136px;top:242px;height:17px;line-height:17px;font-weight:bold;color:#0a0a40">M</div>
<div style="left:1222px;top:242px;width:115px;height:17px;line-height:17px;text-align:left;color:#16165c;background:#e9e9e9;padding-left:3px;"></div>
<div style="left:1222px;top:242px;width:37px;height:17px;line-height:17px;text-align:right;padding-right:3px;color:#16165c">0,00</div>
<div style="left:1261px;top:242px;width:37px;height:17px;line-height:17px;text-align:right;padding-right:3px;color:#16165c">0,00</div>
<div style="left:1300px;top:242px;width:37px;height:17px;line-height:17px;text-align:right;padding-right:3px;color:#16165c">0,00</div>
<div style="left:1259px;top:242px;width:2px;height:17px;background:#fff"></div>
<div style="left:1298px;top:242px;width:2px;height:17px;background:#fff"></div>
<div style="left:1339px;top:242px;width:83px;height:17px;line-height:17px;text-align:right;color:#16165c;background:#e9e9e9;padding-right:1px;font-weight:bold;">1.000,00</div>
<div style="left:1424px;top:242px;width:27px;height:17px;line-height:17px;text-align:left;color:#16165c;background:#e9e9e9;padding-left:2px;">N81</div>
<div style="left:23px;top:260px;width:51px;height:17px;line-height:17px;text-align:left;color:#16165c;background:#e9e9e9;padding-left:3px;"></div>
<div style="left:23px;top:260px;width:18px;height:17px;background:#fff;line-height:17px;padding-left:4px;font-weight:bold">D</div>
<div style="left:41px;top:260px;width:33px;height:17px;line-height:17px;text-align:right;padding-right:2px;color:#16165c">2</div>
<div style="left:76px;top:260px;width:42px;height:17px;line-height:17px;text-align:left;color:#16165c;background:#fff;padding-left:3px;color:#000;">19434</div>
<div style="left:120px;top:260px;width:700px;height:17px;line-height:17px;text-align:left;color:#16165c;background:#e9e9e9;padding-left:6px;"><span style="display:inline-block;transform:scaleX(0.94);transform-origin:0 50%">SERRATURA MOD. 20 - ROX</span></div>
<div style="left:822px;top:260px;width:139px;height:17px;line-height:17px;text-align:left;color:#16165c;background:#e9e9e9;padding-left:3px;"></div>
<div style="left:963px;top:260px;width:23px;height:17px;line-height:17px;text-align:left;color:#16165c;background:#e9e9e9;padding-left:4px;">PZ</div>
<div style="left:988px;top:260px;width:83px;height:17px;line-height:17px;text-align:right;color:#16165c;background:#e9e9e9;padding-right:3px;">1,000</div>
<div style="left:988px;top:260px;width:14px;height:17px;background:#fff"></div>
<div style="left:1073px;top:260px;width:27px;height:17px;line-height:17px;text-align:right;color:#16165c;background:#e9e9e9;padding-right:3px;">0</div>
<div style="left:1102px;top:260px;width:29px;height:17px;line-height:17px;text-align:left;color:#16165c;background:#e9e9e9;padding-left:2px;"><span style="display:inline-block;transform:scaleX(0.91);transform-origin:0 50%">VEN</span></div>
<div style="left:1133px;top:260px;width:87px;height:17px;line-height:17px;text-align:right;color:#16165c;background:#e9e9e9;padding-right:2px;">850,000</div>
<div style="left:1136px;top:260px;height:17px;line-height:17px;font-weight:bold;color:#0a0a40">M</div>
<div style="left:1222px;top:260px;width:115px;height:17px;line-height:17px;text-align:left;color:#16165c;background:#e9e9e9;padding-left:3px;"></div>
<div style="left:1222px;top:260px;width:37px;height:17px;line-height:17px;text-align:right;padding-right:3px;color:#16165c">0,00</div>
<div style="left:1261px;top:260px;width:37px;height:17px;line-height:17px;text-align:right;padding-right:3px;color:#16165c">0,00</div>
<div style="left:1300px;top:260px;width:37px;height:17px;line-height:17px;text-align:right;padding-right:3px;color:#16165c">0,00</div>
<div style="left:1259px;top:260px;width:2px;height:17px;background:#fff"></div>
<div style="left:1298px;top:260px;width:2px;height:17px;background:#fff"></div>
<div style="left:1339px;top:260px;width:83px;height:17px;line-height:17px;text-align:right;color:#16165c;background:#e9e9e9;padding-right:1px;font-weight:bold;">850,00</div>
<div style="left:1424px;top:260px;width:27px;height:17px;line-height:17px;text-align:left;color:#16165c;background:#e9e9e9;padding-left:2px;">N81</div>
<div style="left:23px;top:278px;width:51px;height:17px;background:#e9e9e9"></div>
<div style="left:76px;top:278px;width:42px;height:17px;background:#e9e9e9"></div>
<div style="left:120px;top:278px;width:700px;height:17px;background:#e9e9e9"></div>
<div style="left:822px;top:278px;width:139px;height:17px;background:#e9e9e9"></div>
<div style="left:963px;top:278px;width:23px;height:17px;background:#e9e9e9"></div>
<div style="left:988px;top:278px;width:83px;height:17px;background:#e9e9e9"></div>
<div style="left:1073px;top:278px;width:27px;height:17px;background:#e9e9e9"></div>
<div style="left:1102px;top:278px;width:29px;height:17px;background:#e9e9e9"></div>
<div style="left:1133px;top:278px;width:87px;height:17px;background:#e9e9e9"></div>
<div style="left:1222px;top:278px;width:115px;height:17px;background:#e9e9e9"></div>
<div style="left:1339px;top:278px;width:83px;height:17px;background:#e9e9e9"></div>
<div style="left:1424px;top:278px;width:27px;height:17px;background:#e9e9e9"></div>
<div style="left:23px;top:278px;width:19px;height:17px;background:#c9eef0"></div>
<div style="left:41px;top:278px;width:33px;height:17px;line-height:19px;text-align:right;padding-right:2px;color:#16165c">3</div>
<div style="left:76px;top:278px;width:42px;height:17px;background:#ffffd2"></div>
<div style="left:988px;top:278px;width:15px;height:17px;background:#c9eef0"></div>
<div style="left:988px;top:278px;width:83px;height:17px;line-height:19px;text-align:right;color:#16165c;padding-right:3px;">0,000</div>
<div style="left:1073px;top:278px;width:27px;height:17px;line-height:19px;text-align:right;color:#16165c;padding-right:3px;">0</div>
<div style="left:1102px;top:278px;width:29px;height:17px;line-height:19px;text-align:left;color:#16165c;padding-left:2px;"><span style="display:inline-block;transform:scaleX(0.91);transform-origin:0 50%">VEN</span></div>
<div style="left:1133px;top:278px;width:87px;height:17px;line-height:19px;text-align:right;color:#16165c;padding-right:2px;">0,000</div>
<div style="left:1222px;top:278px;width:37px;height:17px;line-height:19px;text-align:right;padding-right:3px;color:#16165c">0,00</div>
<div style="left:1261px;top:278px;width:37px;height:17px;line-height:19px;text-align:right;padding-right:3px;color:#16165c">0,00</div>
<div style="left:1300px;top:278px;width:37px;height:17px;line-height:19px;text-align:right;padding-right:3px;color:#16165c">0,00</div>
<div style="left:1259px;top:278px;width:2px;height:17px;background:#c9eef0"></div>
<div style="left:1298px;top:278px;width:2px;height:17px;background:#c9eef0"></div>
<div style="left:1339px;top:278px;width:83px;height:17px;line-height:19px;text-align:right;color:#16165c;padding-right:1px;font-weight:bold;">0,00</div>
<div style="left:1424px;top:278px;width:27px;height:17px;background:#f4f4f4"></div>
<div style="left:23px;top:278px;width:51px;height:1px;background:#1c64c8"></div>
<div style="left:23px;top:294px;width:51px;height:1px;background:#1c64c8"></div>
<div style="left:76px;top:278px;width:42px;height:1px;background:#1c64c8"></div>
<div style="left:76px;top:294px;width:42px;height:1px;background:#1c64c8"></div>
<div style="left:120px;top:278px;width:700px;height:1px;background:#1c64c8"></div>
<div style="left:120px;top:294px;width:700px;height:1px;background:#1c64c8"></div>
<div style="left:822px;top:278px;width:139px;height:1px;background:#1c64c8"></div>
<div style="left:822px;top:294px;width:139px;height:1px;background:#1c64c8"></div>
<div style="left:963px;top:278px;width:23px;height:1px;background:#1c64c8"></div>
<div style="left:963px;top:294px;width:23px;height:1px;background:#1c64c8"></div>
<div style="left:988px;top:278px;width:83px;height:1px;background:#1c64c8"></div>
<div style="left:988px;top:294px;width:83px;height:1px;background:#1c64c8"></div>
<div style="left:1073px;top:278px;width:27px;height:1px;background:#1c64c8"></div>
<div style="left:1073px;top:294px;width:27px;height:1px;background:#1c64c8"></div>
<div style="left:1102px;top:278px;width:29px;height:1px;background:#1c64c8"></div>
<div style="left:1102px;top:294px;width:29px;height:1px;background:#1c64c8"></div>
<div style="left:1133px;top:278px;width:87px;height:1px;background:#1c64c8"></div>
<div style="left:1133px;top:294px;width:87px;height:1px;background:#1c64c8"></div>
<div style="left:1222px;top:278px;width:115px;height:1px;background:#1c64c8"></div>
<div style="left:1222px;top:294px;width:115px;height:1px;background:#1c64c8"></div>
<div style="left:1339px;top:278px;width:83px;height:1px;background:#1c64c8"></div>
<div style="left:1339px;top:294px;width:83px;height:1px;background:#1c64c8"></div>
<div style="left:1424px;top:278px;width:27px;height:1px;background:#1c64c8"></div>
<div style="left:1424px;top:294px;width:27px;height:1px;background:#1c64c8"></div>
<div style="left:23px;top:278px;width:1px;height:17px;background:#1c64c8"></div>
<div style="left:1450px;top:278px;width:1px;height:17px;background:#1c64c8"></div>
<svg style="position:absolute;left:17px;top:285px" width="6" height="7"><path d="M0 0L5 3.5L0 7z" fill="#000"/></svg>
<div style="left:1451px;top:241px;width:17px;height:222px;background:#f0f0f0"></div>
<div style="left:1458px;top:258px;width:2px;height:188px;background:#8a8a8a"></div>
<div style="left:1131px;top:205px;width:321px;height:19px;border:1px solid #a9a9a9;border-bottom:none;background:#fff"></div>
<div style="left:1220px;top:206px;width:1px;height:18px;background:#a9a9a9"></div>
<div class="b" style="left:1142px;top:207px;line-height:16px;color:#1c1cb8"><span style="display:inline-block;transform:scaleX(0.97);transform-origin:0 50%">IVA ESCLUSA</span></div>
<div style="left:1227px;top:207px;line-height:16px">Scontato: <b style="color:#0a0a40">0,00000</b></div>
<div style="left:1361px;top:207px;line-height:16px">Ivato: <b style="color:#0a0a40">0,00000</b></div>
<div class="btn" style="left:1452px;top:206px;width:17px;height:17px;"></div>
<svg style="position:absolute;left:1453px;top:207px" width="15" height="15" viewBox="0 0 15 15"><defs><linearGradient id="pg" x1="0" y1="0" x2="0" y2="1"><stop offset="0" stop-color="#8ee070"/><stop offset="1" stop-color="#2fa02a"/></linearGradient></defs><path d="M5.2 1.2h3.6v3.8h3.9v3.6h-3.9v3.9h-3.6v-3.9h-3.9v-3.6h3.9z" fill="url(#pg)" stroke="#3a9a30" stroke-width=".7"/></svg>
<div class="btn" style="left:1452px;top:224px;width:17px;height:16px;"></div>
<div style="left:1454px;top:229px;width:12px;height:5px;background:linear-gradient(#f08080,#d83838);border:1px solid #b02a2a"></div>
<div style="left:1420px;top:219px;width:34px;height:79px;border:3px solid #e02030"></div>
<div style="left:12px;top:463px;width:947px;height:27px;border:1px solid #a9a9a9;border-top:none"></div>
<div class="lb" style="left:19px;top:467px;height:20px;line-height:20px;">L/S:</div>
<div class="r" style="left:40px;top:466px;width:124px;height:20px;"></div>
<div class="lb" style="left:167px;top:467px;height:20px;line-height:20px;">Scad.:</div>
<div class="r" style="left:201px;top:466px;width:66px;height:20px;color:#111144;padding-left:2px">&nbsp;&nbsp;-&nbsp;&nbsp;-</div>
<div style="left:734px;top:466px;width:50px;height:20px;"><div style="left:0;top:0;line-height:20px;text-decoration:underline;transform:scaleX(.95);transform-origin:0 50%">Riga Ivato:</div></div>
<div class="r" style="left:787px;top:466px;width:72px;height:20px;text-align:right;padding-right:5px">0,00</div>
<div class="btn" style="left:873px;top:466px;width:56px;height:22px;"></div>
<svg style="position:absolute;left:876px;top:469px" width="16" height="13" viewBox="0 0 16 13"><path d="M1 5 L4 1.5 L8 3.5 L11 2.5 L15 6 L12.5 10 L8 8 L4 10z" fill="#8c929a" stroke="#4e545c" stroke-width=".7"/><ellipse cx="5" cy="8" rx="3" ry="2.6" fill="#cfe0f0" stroke="#4e545c" stroke-width=".9"/><ellipse cx="12" cy="8.2" rx="2.7" ry="2.4" fill="#cfe0f0" stroke="#4e545c" stroke-width=".9"/></svg>
<div style="left:895px;top:470px;line-height:14px;font-size:11px">Trova</div>
<div style="left:14px;top:495px;width:66px;height:22px;border:1px solid #e0e0e0;border-radius:4px;background:#f7f7f7"></div>
<svg style="position:absolute;left:18px;top:498px" width="17" height="16" viewBox="0 0 17 16"><defs><linearGradient id="cg" x1="0" y1="0" x2="1" y2="1"><stop offset="0" stop-color="#fff"/><stop offset="1" stop-color="#bdbdbd"/></linearGradient></defs><path d="M0.5 5.5 L5 0.5 H15.5 L15.5 10.5 L10.5 15.5 H0.5z" fill="#9a9a9a" stroke="#6a6a6a"/><path d="M1 5.5 H10.5 V15 H1z" fill="url(#cg)"/><path d="M1.2 5.2 L5.3 1 H14.8 L10.5 5.2z" fill="#f4f4f4"/><path d="M10.8 5.6 L15 1.3 V10.3 L10.8 14.6z" fill="#a8a8a8"/><path d="M0.5 5.5 H10.5 V15.5 M10.5 5.5 L15.5 0.5" fill="none" stroke="#6a6a6a" stroke-width=".9"/></svg>
<div style="left:37.5px;top:499px;line-height:14px;font-size:11px;color:#6a6a6a">Articolo</div>
<div style="left:83px;top:495px;width:64px;height:22px;border:1px solid #e0e0e0;border-radius:4px;background:#f7f7f7"></div>
<svg style="position:absolute;left:92px;top:498px" width="17" height="16" viewBox="0 0 17 16"><path d="M1 1.5 H7 V10 H1z" fill="#8c8c8c" stroke="#666" stroke-width=".7"/><path d="M4 6 L9.5 2 L16 8 L10 14 L4 9z" fill="#9e9e9e" stroke="#6a6a6a" stroke-width=".8"/><path d="M2 9 C2 5 6 3.5 9 5.5 L7.5 7.5 C6 6.5 4 7 4 9 L6 9 L3 13 L0 9z" fill="#707070"/><circle cx="10.5" cy="8" r="1" fill="#eee"/></svg>
<div style="left:111px;top:499px;line-height:14px;font-size:11px;color:#6a6a6a">Costi</div>
<div style="left:150px;top:495px;width:64px;height:22px;border:1px solid #e0e0e0;border-radius:4px;background:#f7f7f7"></div>
<svg style="position:absolute;left:157px;top:498px" width="17" height="16" viewBox="0 0 17 16"><path d="M0.5 1 H7 V10 H0.5z" fill="#8c8c8c" stroke="#666" stroke-width=".7"/><path d="M5 5 L10 2 L16 8 L10 14 L5 11z" fill="#a5a5a5" stroke="#707070" stroke-width=".8"/><path d="M3 14 L6 9 L4.5 9 L7 5 L9.5 9 L8 9 L5.5 14z" fill="#7a7a7a" stroke="#555" stroke-width=".5"/></svg>
<div style="left:175.5px;top:499px;line-height:14px;font-size:11px;color:#6a6a6a">Ricavi</div>
<div style="left:217px;top:495px;width:72px;height:22px;border:1px solid #e0e0e0;border-radius:4px;background:#f7f7f7"></div>
<svg style="position:absolute;left:220px;top:498px" width="17" height="16" viewBox="0 0 17 16"><rect x="4.5" y="0.5" width="12" height="15" fill="#f0f0f0" stroke="#5a5a5a"/><path d="M7 2.5h5" stroke="#777" stroke-width="1.2"/><path d="M6.5 5h8M6.5 7h8M6.5 9h8M6.5 11h8" stroke="#b0b0b0" stroke-width="1"/><path d="M1 5 L7.5 12.5" stroke="#222" stroke-width="3" stroke-linecap="round"/><path d="M2 5.8 L3.5 7.5" stroke="#888" stroke-width="1"/><path d="M7.8 12.8 L9 14.5" stroke="#111" stroke-width="1.2"/></svg>
<div style="left:239.5px;top:499px;line-height:14px;font-size:11px;color:#6a6a6a">Contratti</div>
<div style="left:292px;top:495px;width:78px;height:22px;border:1px solid #e0e0e0;border-radius:4px;background:#f7f7f7"></div>
<svg style="position:absolute;left:296px;top:499px" width="17" height="16" viewBox="0 0 17 16"><rect x="0.5" y="0.5" width="16" height="13" fill="#e6e6e6" stroke="#5a5a5a"/><rect x="0.5" y="0.5" width="16" height="2" fill="#6a6a6a"/><path d="M2 12 C4 6 7 4 9 6 C11 8 12 10 15 4" fill="none" stroke="#222" stroke-width="1.3"/><path d="M2 12.5 H15" stroke="#999" stroke-dasharray="1.5 1" stroke-width="1"/><path d="M9 6 C11 8 12 10 15 4 V12 H9z" fill="#c8c8c8" opacity=".7"/></svg>
<div style="left:314.5px;top:499px;line-height:14px;font-size:11px;color:#6a6a6a">Movimenti</div>
<div style="left:373px;top:495px;width:87px;height:22px;border:1px solid #e0e0e0;border-radius:4px;background:#f7f7f7"></div>
<svg style="position:absolute;left:381px;top:498px" width="17" height="16" viewBox="0 0 17 16"><rect x="0.5" y="1.5" width="14" height="14" fill="#f4f4f4" stroke="#c4c4c4"/><rect x="4.5" y="0" width="6" height="3" fill="#e4e4e4" stroke="#c4c4c4" stroke-width=".7"/><path d="M3 8.5 L6.5 12.5 L13 4.5" fill="none" stroke="#b4b4b4" stroke-width="2"/></svg>
<div style="left:399px;top:499px;line-height:14px;font-size:11px;color:#7a7a7a">PreOrdine</div>
<div style="left:463px;top:495px;width:69px;height:22px;border:1px solid #c4c4c4;border-radius:4px;background:#fbfbfb"></div>
<svg style="position:absolute;left:465px;top:498px" width="17" height="16" viewBox="0 0 17 16"><defs><linearGradient id="tg" x1="0" y1="0" x2="1" y2="0"><stop offset="0" stop-color="#fff"/><stop offset="1" stop-color="#b9c4d8"/></linearGradient></defs><path d="M4.5 0.5 H15.5 V9.5 H4.5 L0.8 5z" fill="url(#tg)" stroke="#3f5478" stroke-width=".9"/><path d="M5.5 5.5 H16.5 V14.5 H5.5 L1.8 10z" fill="url(#tg)" stroke="#3f5478" stroke-width=".9"/><circle cx="3.8" cy="10" r=".8" fill="#3f5478"/><circle cx="2.8" cy="5" r=".8" fill="#3f5478"/></svg>
<div style="left:484px;top:499px;line-height:14px;font-size:11px;color:#000">Etichette</div>
<div style="left:535px;top:495px;width:54px;height:22px;border:1px solid #e0e0e0;border-radius:4px;background:#f7f7f7"></div>
<svg style="position:absolute;left:539px;top:498px" width="17" height="16" viewBox="0 0 17 16"><path d="M4 1 L13 0.5 L15.5 12.5 L6 14z" fill="#e6e6e6" stroke="#d4d4d4" stroke-width=".6"/><path d="M2 2.5 L12.5 1.5 L14.5 13.5 L1 14z" fill="#cfcfcf" stroke="#dadada" stroke-width=".6"/><path d="M2.2 2.7 L12.3 1.8 L12.8 5 L2.4 6z" fill="#e8e8e8"/></svg>
<div style="left:557.5px;top:499px;line-height:14px;font-size:11px;color:#8a8a8a">Note</div>
<div style="left:592px;top:495px;width:75px;height:22px;border:1px solid #e0e0e0;border-radius:4px;background:#f7f7f7"></div>
<svg style="position:absolute;left:597px;top:498px" width="17" height="16" viewBox="0 0 17 16"><path d="M1.5 1.5 H11.5 V4 H10.5 L10 3 H5 L8.5 7.5 L4.5 12 H10 L10.8 10.8 H11.8 V13.5 H1 V12.8 L5.5 7.8 L1.5 2.2z" fill="#151515"/></svg>
<div style="left:611px;top:499px;line-height:14px;font-size:11px;color:#6a6a6a">Totali Riga</div>
<div style="left:670px;top:495px;width:90px;height:22px;border:1px solid #e0e0e0;border-radius:4px;background:#f7f7f7"></div>
<svg style="position:absolute;left:672px;top:498px" width="17" height="16" viewBox="0 0 17 16"><defs><radialGradient id="cng" cx=".4" cy=".35" r=".7"><stop offset="0" stop-color="#f4f4f4"/><stop offset="1" stop-color="#9a9a9a"/></radialGradient></defs><path d="M8 0.8 L10.5 1.8 L13 1.5 L14.3 4 L15.8 6.5 L14.8 9 L15 12 L12.5 13.3 L10 15.2 L7.5 14.2 L4.5 14.8 L3.5 12 L1 9.5 L2.2 7 L1.5 4 L4.5 2.5z" fill="url(#cng)" stroke="#c4c4c4" stroke-width=".6"/></svg>
<div style="left:690px;top:499px;line-height:14px;font-size:11px;color:#7a7a7a">Sc. da Valore</div>
<div style="left:763px;top:495px;width:90px;height:22px;border:1px solid #d0d0d0;border-radius:4px;background:#fbfbfb"></div>
<svg style="position:absolute;left:765px;top:498px" width="17" height="16" viewBox="0 0 17 16"><path d="M6.5 9 L12 5.5 L15 10.5 L9.5 14.5z" fill="#8ca06a" stroke="#4a5a3a" stroke-width=".7"/><path d="M1.5 4 C1.5 1.5 4.5 0.5 6 2 L10 6.5 C11.5 8.5 11 12 8.5 12.5 C6 13 3 11.5 2.5 9z" fill="#d69a72" stroke="#6a3a22" stroke-width=".8"/><path d="M1 3 C1 0.5 4 0 5.5 1.2 L3.5 4.5z" fill="#1e1e1e"/><path d="M3 6 C4 5 6 5.5 6.5 7" fill="none" stroke="#9a5a3a" stroke-width=".6"/></svg>
<div style="left:782.5px;top:499px;line-height:14px;font-size:11px;color:#000">Rich. Acconto</div>
<div style="left:856px;top:495px;width:90px;height:22px;border:1px solid #d0d0d0;border-radius:4px;background:#fbfbfb"></div>
<svg style="position:absolute;left:861px;top:498px" width="17" height="16" viewBox="0 0 17 16"><path d="M1 11.5 L11.5 1 L15 4.5 L4.5 15z" fill="#c7ad8e" stroke="#8a6f52" stroke-width=".8"/><path d="M1 4.5 L4.5 1 L15 11.5 L11.5 15z" fill="#d3bc9f" stroke="#8a6f52" stroke-width=".8"/><rect x="6.3" y="6.3" width="3.4" height="3.4" fill="#efe6da" transform="rotate(45 8 8)"/></svg>
<div style="left:879px;top:499px;line-height:14px;font-size:11px;color:#000">Rich. Buono</div>
<div style="left:118px;top:526px;width:62px;height:14px;border:1px solid #a9a9a9;text-align:center;line-height:12px"><span style="display:inline-block;transform:scaleX(.95)">Mag. Prin.</span></div>
<div style="left:180px;top:526px;width:61px;height:14px;border:1px solid #a9a9a9;text-align:center;line-height:12px"><span style="display:inline-block;transform:scaleX(.95)">Mag. Sec.</span></div>
<div style="left:241px;top:526px;width:61px;height:14px;border:1px solid #a9a9a9;text-align:center;line-height:12px"><span style="display:inline-block;transform:scaleX(.95)">Totale</span></div>
<div style="left:44px;top:539px;width:258px;height:48px;border:1px solid #a9a9a9"></div>
<div style="left:118px;top:539px;width:1px;height:48px;background:#a9a9a9"></div>
<div style="left:119px;top:539px;width:61px;height:48px;border:1px solid #a9a9a9;border-top:none"></div>
<div style="left:180px;top:539px;width:61px;height:48px;border:1px solid #a9a9a9;border-top:none"></div>
<div style="left:241px;top:539px;width:61px;height:48px;border:1px solid #a9a9a9;border-top:none"></div>
<div style="left:49px;top:541px;line-height:14px">Esistenza</div>
<div class="b" style="right:1313px;top:541px;line-height:14px;color:#10105a">0,000</div>
<div class="b" style="right:1252px;top:541px;line-height:14px;color:#10105a">0,000</div>
<div class="b" style="right:1191px;top:541px;line-height:14px;color:#10105a">0,000</div>
<div style="left:49px;top:556px;line-height:14px">Disp. Cont.</div>
<div class="b" style="right:1313px;top:556px;line-height:14px;color:#10105a">0,000</div>
<div class="b" style="right:1252px;top:556px;line-height:14px;color:#10105a">0,000</div>
<div class="b" style="right:1191px;top:556px;line-height:14px;color:#10105a">0,000</div>
<div style="left:49px;top:571px;line-height:14px">Disponibilità</div>
<div class="b" style="right:1313px;top:571px;line-height:14px;color:#10105a">0,000</div>
<div class="b" style="right:1252px;top:571px;line-height:14px;color:#10105a">0,000</div>
<div class="b" style="right:1191px;top:571px;line-height:14px;color:#10105a">0,000</div>
<div style="left:44px;top:587px;width:136px;height:18px;border:1px solid #a9a9a9"></div>
<div style="left:180px;top:587px;width:61px;height:18px;border:1px solid #a9a9a9"></div>
<div style="left:241px;top:587px;width:61px;height:18px;border:1px solid #a9a9a9"></div>
<div style="left:49px;top:589px;line-height:14px"><span style="display:inline-block;transform:scaleX(0.96);transform-origin:0 50%">Lotto di Riord.</span></div>
<div class="b" style="right:1313px;top:588px;line-height:14px;color:#10105a">0</div>
<div style="left:183px;top:590px;line-height:14px;font-size:10px;letter-spacing:-.3px">Min:</div>
<div class="b" style="right:1252px;top:588px;line-height:14px;color:#10105a">0</div>
<div style="left:242px;top:590px;line-height:14px;font-size:10px;letter-spacing:-.3px">Max:</div>
<div class="b" style="right:1191px;top:588px;line-height:14px;color:#10105a">0</div>
<div class="lb" style="right:1090px;top:523px;height:17px;line-height:17px;text-align:right;">Descr. Articolo:</div>
<div class="lb" style="right:1090px;top:539px;height:17px;line-height:17px;text-align:right;">Cod. Prod.:</div>
<div class="lb" style="right:1090px;top:556px;height:17px;line-height:17px;text-align:right;">Costo d'Acq.:</div>
<div class="lb" style="right:1090px;top:572px;height:17px;line-height:17px;text-align:right;">Prezzo a Cliente:</div>
<div class="lb" style="right:1090px;top:588px;height:17px;line-height:17px;text-align:right;">Listino Agg.:</div>
<div style="left:402px;top:520px;width:382px;height:20px;border:1px solid #a9a9a9;background:#eeeeee"></div>
<div style="left:402px;top:539px;width:158px;height:17px;border:1px solid #a9a9a9;background:#eeeeee;line-height:16px;padding-left:2px;color:#16167a"></div>
<div style="left:402px;top:555px;width:158px;height:17px;border:1px solid #a9a9a9;background:#eeeeee;line-height:16px;padding-left:2px;color:#16167a">0,00</div>
<div class="lb" style="left:562px;top:556px;height:17px;line-height:17px;">Diff.:</div>
<div style="left:588px;top:555px;width:196px;height:17px;border:1px solid #a9a9a9;background:#eeeeee;line-height:16px;padding-left:2px;color:#16167a">0,00</div>
<div style="left:402px;top:571px;width:158px;height:17px;border:1px solid #a9a9a9;background:#eeeeee;line-height:16px;padding-left:2px;color:#16167a">0,00</div>
<div class="lb" style="left:562px;top:572px;height:17px;line-height:17px;">Diff.:</div>
<div style="left:588px;top:571px;width:196px;height:17px;border:1px solid #a9a9a9;background:#eeeeee;line-height:16px;padding-left:2px;color:#16167a">0,00</div>
<div style="left:402px;top:587px;width:158px;height:17px;border:1px solid #a9a9a9;background:#eeeeee;line-height:16px;padding-left:2px;color:#16167a">0,00</div>
<div class="lb" style="left:562px;top:588px;height:17px;line-height:17px;">Diff.:</div>
<div style="left:588px;top:587px;width:196px;height:17px;border:1px solid #a9a9a9;background:#eeeeee;line-height:16px;padding-left:2px;color:#16167a">0,00</div>
<div style="left:796px;top:526px;font-family:'Liberation Serif';font-size:14px;font-weight:bold;line-height:14px">&#931;</div>
<div class="b" style="left:813px;top:524px;line-height:14px">Totali</div>
<div style="left:845px;top:531px;width:106px;height:1px;background:repeating-linear-gradient(90deg,#8a8a8a 0 3px,transparent 3px 6px)"></div>
<div class="lb b" style="right:622px;top:540px;height:17px;line-height:17px;text-align:right;">Quantità:</div>
<div class="b" style="left:870px;top:539px;width:88px;height:17px;border:1px solid #a9a9a9;background:#eeeeee;line-height:16px;text-align:right;padding-right:3px;letter-spacing:.55px;color:#10105a">2,000</div>
<div class="lb b" style="right:622px;top:556px;height:17px;line-height:17px;text-align:right;">Merce:</div>
<div class="b" style="left:870px;top:555px;width:88px;height:17px;border:1px solid #a9a9a9;background:#eeeeee;line-height:16px;text-align:right;padding-right:3px;letter-spacing:.55px;color:#10105a">1.850,00</div>
<div class="lb b" style="right:622px;top:572px;height:17px;line-height:17px;text-align:right;">Documento:</div>
<div class="b" style="left:870px;top:571px;width:88px;height:17px;border:1px solid #a9a9a9;background:#eeeeee;line-height:16px;text-align:right;padding-right:3px;letter-spacing:.55px;color:#10105a">1.850,00</div>
</body></html>
